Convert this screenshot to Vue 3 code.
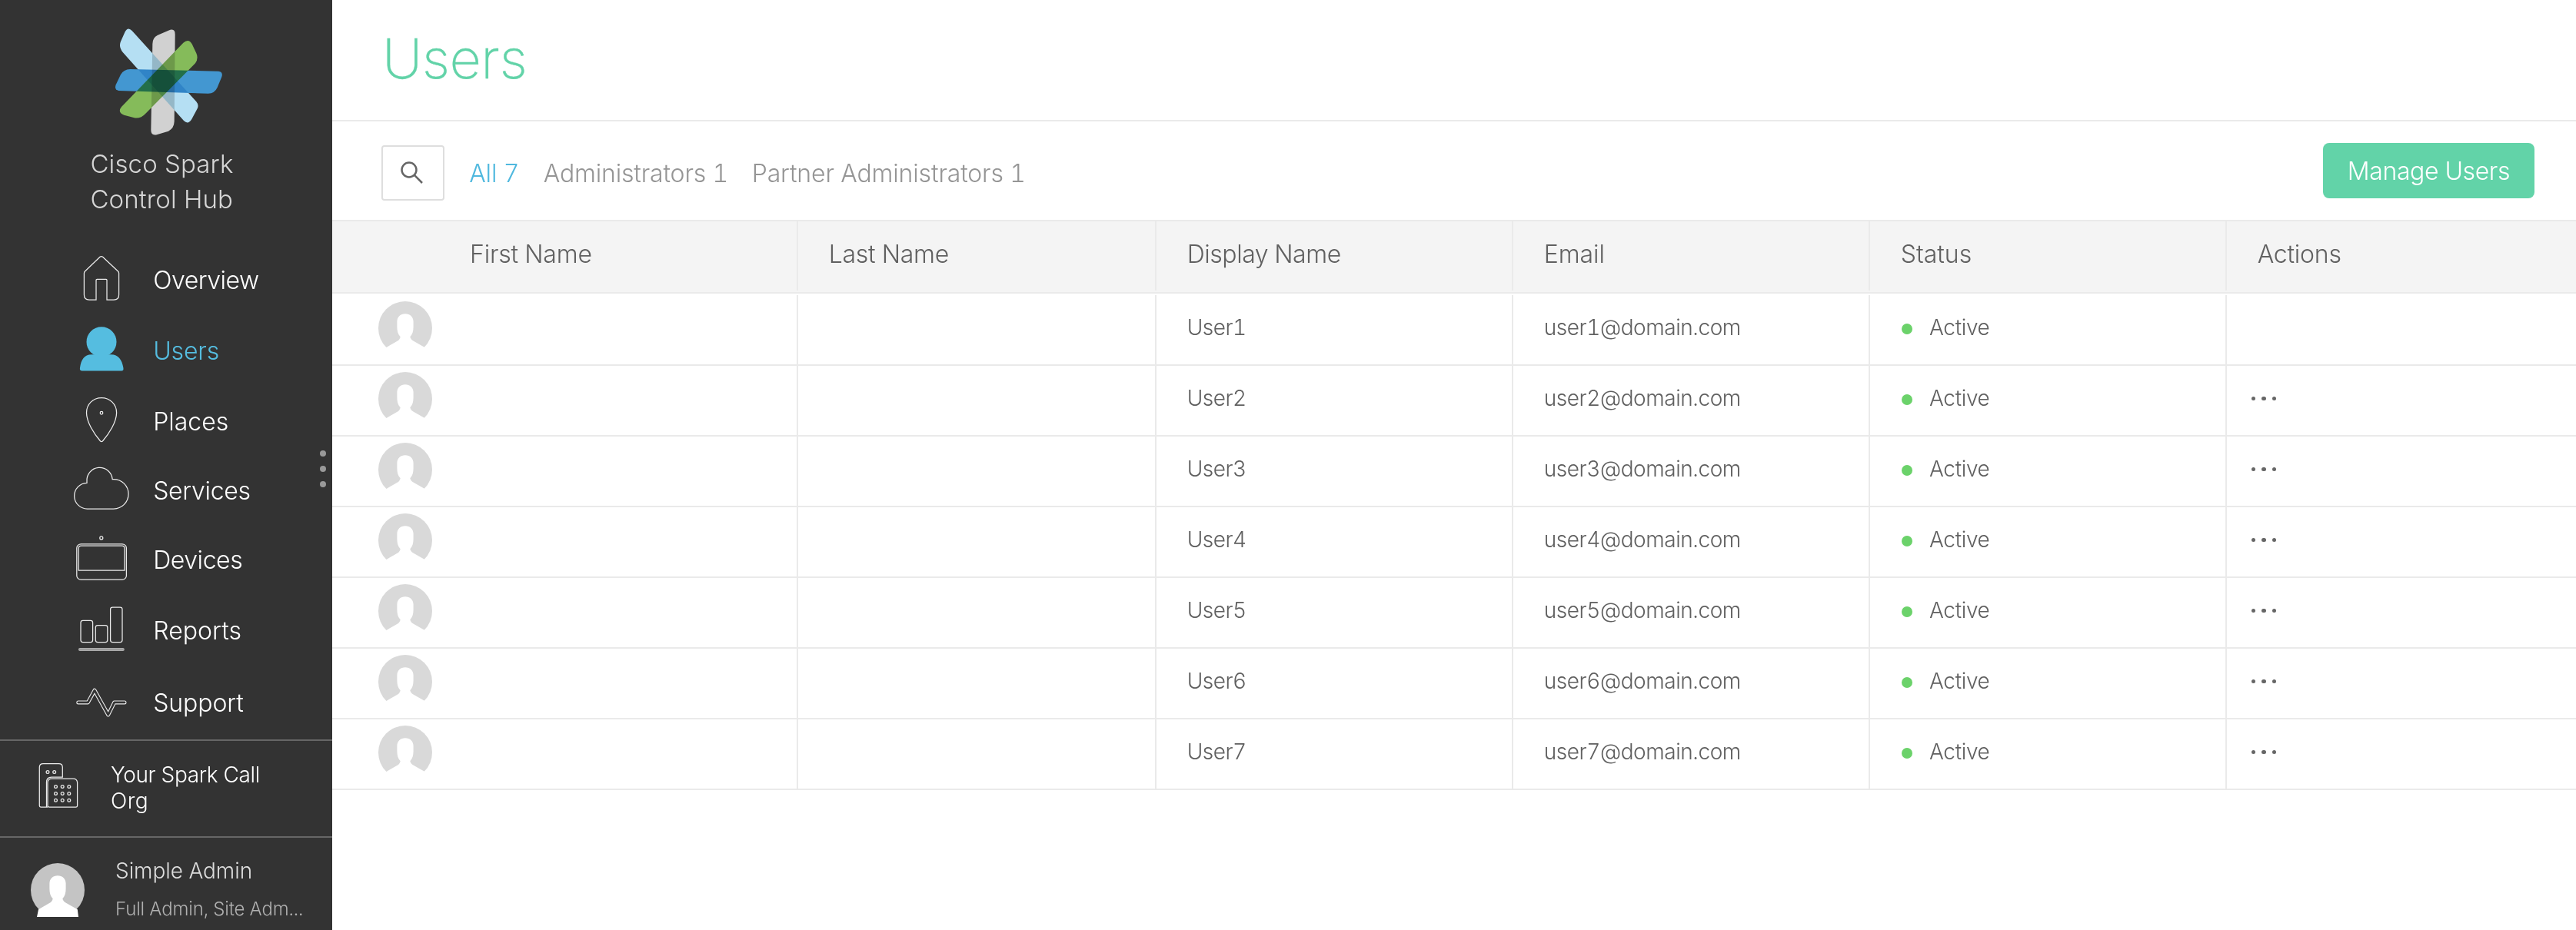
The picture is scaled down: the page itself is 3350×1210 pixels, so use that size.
<script setup>
const nav = [
  { id: 'overview', label: 'Overview' },
  { id: 'users', label: 'Users' },
  { id: 'places', label: 'Places' },
  { id: 'services', label: 'Services' },
  { id: 'devices', label: 'Devices' },
  { id: 'reports', label: 'Reports' },
  { id: 'support', label: 'Support' },
]
const columns = [
  { id: 'first', label: 'First Name' },
  { id: 'last', label: 'Last Name' },
  { id: 'display', label: 'Display Name' },
  { id: 'email', label: 'Email' },
  { id: 'status', label: 'Status' },
  { id: 'actions', label: 'Actions' },
]
const users = [1, 2, 3, 4, 5, 6, 7].map((n) => ({
  id: n,
  name: `User${n}`,
  email: `user${n}@domain.com`,
  status: 'Active',
  menu: n > 1,
}))
const silhouette =
  'M35 16.3C41 16.3 45.6 20.4 45.6 26.5V33C45.6 38.5 44.6 43 41.3 46.2C42 48.2 42.8 50 45 51.2L60.8 60.2L62 70H8L10 60.2L25.5 51.2C27.6 50 28 48.2 28.7 46.2C25.4 43 24.4 38.5 24.4 33V26.5C24.4 20.4 29 16.3 35 16.3Z'
</script>

<template>
  <div class="app">
    <aside class="sidebar">
      <div class="brand">
        <svg class="logo" viewBox="0 0 720 480">
          <g class="petals">
            <path fill="#b5dff3" d="M215 60L466 337Q477 350 470 364L448 405Q434 428 417 411L179 144Q162 122 171 102L188 64Q199 43 215 60Z" />
            <path fill="#d1d1d1" d="M295 114Q294 87 315 77L357 59Q383 47 383 74L380 414Q379 441 357 452L314 465Q289 472 289 447Z" />
            <path fill="#85bb5a" d="M415 107Q436 89 449 112L466 148Q475 168 462 187L268 383Q249 404 224 400L184 389Q157 378 174 357Z" />
            <path fill="#4397d1" d="M208 210L552 218Q571 220 565 240L548 281Q538 304 512 305L163 294Q145 290 152 271L171 231Q182 211 208 210Z" />
          </g>
        </svg>
        <div class="brand-name">
          <span>Cisco Spark</span>
          <span>Control Hub</span>
        </div>
      </div>

      <nav class="nav">
        <a v-for="item in nav" :key="item.id" class="nav-item" :class="`nav-${item.id}`">
          <svg class="nav-icon" viewBox="0 0 80 90">
            <path v-if="item.id === 'overview'" d="M33 71H24Q17.4 71 17.4 64.5V36.5Q17.4 35 18.5 34L38 15.3Q39.8 13.8 41.6 15.3L61.5 34Q62.6 35 62.6 36.5V64.5Q62.6 71 56 71H47V45.5Q47 44.4 46 44.4H34.2Q33 44.4 33 45.5Z" />
            <g v-else-if="item.id === 'users'" class="solid">
              <circle cx="40" cy="33.7" r="19.5" />
              <path d="M15 71.4Q11.2 71.4 12 67.5C13.5 57 17.5 50.3 27 50.3H52.5C62 50.3 66.5 57 68.4 67.5Q69.2 71.4 66 71.4Z" />
            </g>
            <g v-else-if="item.id === 'places'">
              <path d="M40 14.6C29 14.6 20.5 23 20.5 34C20.5 46 30 61 38.6 71Q40 72.2 41.4 71C50 61 59.6 46 59.6 34C59.6 23 51 14.6 40 14.6Z" />
              <circle cx="40" cy="34.2" r="1.8" />
            </g>
            <path v-else-if="item.id === 'services'" d="M22 69A16.85 16.85 0 0 1 21 35.3V33.5A16.6 16.6 0 0 1 54.2 30.5H55.8A19.25 19.25 0 0 1 55.8 69Z" />
            <g v-else-if="item.id === 'devices'">
              <circle cx="39.8" cy="16.9" r="2" />
              <rect x="7.8" y="24.8" width="64.6" height="49.2" rx="5.5" transform="translate(0 1.5) scale(1 .94)" />
              <path d="M10.2 59V30.5Q10.2 27 13.7 27H66.5Q70 27 70 30.5V59Z" />
            </g>
            <g v-else-if="item.id === 'reports'">
              <rect x="13" y="32.3" width="15.6" height="28.3" rx="2.8" />
              <rect x="32.3" y="38.7" width="15.5" height="21.9" rx="2.8" />
              <rect x="51.6" y="15" width="15.4" height="45.6" rx="2.8" />
              <rect class="base" x="10.6" y="68.6" width="58.6" height="2.8" rx="1.4" />
            </g>
            <g v-else>
              <path class="pulse-edge" d="M9.8 44.9H22.4L31 29.2L48.7 61L56.7 44.9H70" />
              <path class="pulse-core" d="M9.8 44.9H22.4L31 29.2L48.7 61L56.7 44.9H70" />
            </g>
          </svg>
          <span>{{ item.label }}</span>
        </a>
      </nav>
      <div class="grip"><i /><i /><i /></div>

      <div class="org">
        <svg class="org-icon" viewBox="0 0 60 70">
          <path d="M22 68H13Q11.3 68 11.3 66.3V16.3Q11.3 11.5 16.1 11.5H36.5Q41.3 11.5 41.3 16.3V29.2H27Q20.5 29.2 20.5 36V68" />
          <path d="M24 68Q22 68 22 66.3V36.6Q22 31 27.6 31H55Q60.6 31 60.6 36.6V66.3Q60.6 68 59 68Z" />
          <circle cx="22" cy="22.4" r="1.9" /><circle cx="30.7" cy="22.4" r="1.9" />
          <template v-for="y in [41.6, 50.4, 59.2]" :key="y">
            <circle v-for="x in [32.5, 41.2, 49.8]" :key="x" :cx="x" :cy="y" r="1.9" />
          </template>
        </svg>
        <div class="org-name"><span class="org-first">Your Spark Call</span><span class="org-second">Org</span></div>
      </div>

      <div class="account">
        <svg class="avatar" viewBox="0 0 70 70">
          <circle cx="35" cy="35" r="35" fill="#c4c4c4" />
          <path :d="silhouette" fill="#fff" />
        </svg>
        <div class="account-text">
          <span class="account-name">Simple Admin</span>
          <span class="account-role">Full Admin, Site Adm...</span>
        </div>
      </div>
    </aside>

    <main class="main">
      <h1 class="title">Users</h1>
      <div class="toolbar">
        <button class="search">
          <svg viewBox="0 0 78 68">
            <circle cx="34" cy="30" r="9.5" />
            <path d="M41.2 37.2L51 47" />
          </svg>
        </button>
        <div class="filters">
          <a class="filter-all">All 7</a>
          <a class="filter-admin">Administrators 1</a>
          <a class="filter-partner">Partner Administrators 1</a>
        </div>
        <button class="manage">Manage Users</button>
      </div>

      <div class="table">
        <div class="row head">
          <div v-for="c in columns" :key="c.id" class="cell" :class="`h-${c.id}`">{{ c.label }}</div>
        </div>
        <div v-for="u in users" :key="u.id" class="row body">
          <div class="cell c-avatar">
            <svg class="avatar" viewBox="0 0 70 70">
              <circle cx="35" cy="35" r="35" fill="#d9d9d9" />
              <path :d="silhouette" fill="#fff" />
            </svg>
          </div>
          <div class="cell" />
          <div class="cell c-name">{{ u.name }}</div>
          <div class="cell c-email">{{ u.email }}</div>
          <div class="cell c-status"><i class="dot" /><span>{{ u.status }}</span></div>
          <div class="cell c-actions">
            <span v-if="u.menu" class="more"><i /><i /><i /></span>
          </div>
        </div>
      </div>
    </main>
  </div>
</template>

<style>
body { margin: 0; background: #fff; }
</style>

<style scoped>
.app {
  display: flex;
  height: 1210px;
  overflow: hidden;
  font-family: Inter, "Liberation Sans", sans-serif;
  font-weight: 300;
  font-variant-numeric: tabular-nums;
  white-space: nowrap;
}
svg { display: block; flex: none; }

.sidebar {
  position: relative;
  display: flex;
  flex-direction: column;
  flex: none;
  width: 432px;
  background: #333;
  color: #fff;
}
.brand { padding-top: 20px; }
.logo { width: 240px; height: 160px; margin-left: 100px; }
.petals { isolation: isolate; }
.petals path { mix-blend-mode: multiply; }
.brand-name {
  display: flex;
  flex-direction: column;
  margin: 10px 0 0 117.4px;
  font-size: 33px;
  line-height: 46px;
  letter-spacing: 0.15px;
  color: #d6d6d6;
}

.nav { display: flex; flex-direction: column; margin-top: 37px; }
.nav-item {
  display: flex;
  height: 90px;
  padding-left: 92px;
  gap: 27.2px;
  font-size: 32px;
  line-height: 92px;
}
.nav-icon { width: 80px; height: 90px; fill: none; stroke: #ececec; stroke-width: 1.25; }
.nav-overview { letter-spacing: -0.5px; }
.nav-users { margin-top: 2px; letter-spacing: -0.15px; color: #55bde0; }
.nav-users .solid { fill: #55bde0; stroke: none; }
.nav-places { margin-top: 2px; }
.nav-services { letter-spacing: -0.31px; }
.nav-devices { letter-spacing: -0.44px; }
.nav-reports { margin-top: 2px; letter-spacing: 0.07px; }
.nav-support { margin-top: 4px; letter-spacing: -0.09px; }
.base { fill: #999; stroke: #aaa; }
.pulse-edge { stroke-width: 5; stroke-linejoin: round; stroke-linecap: round; }
.pulse-core { stroke: #333; stroke-width: 2.8; stroke-linejoin: round; stroke-linecap: round; }

.grip {
  position: absolute;
  top: 586px;
  right: 8px;
  display: flex;
  flex-direction: column;
  gap: 12px;
}
.grip i { width: 8px; height: 8px; border-radius: 50%; background: #999; }

.org {
  display: flex;
  height: 124px;
  margin-top: 3px;
  border-top: 2px solid #666;
  font-size: 28px;
  line-height: 34px;
}
.org-icon {
  width: 60px;
  height: 70px;
  margin: 18px 0 0 40px;
  overflow: visible;
  fill: none;
  stroke: #ececec;
  stroke-width: 1.25;
}
.org-name { display: flex; flex-direction: column; margin: 27px 0 0 44px; }
.org-first { letter-spacing: -0.33px; }
.org-second { letter-spacing: 0.4px; }
.account { display: flex; flex: 1; border-top: 2px solid #666; }
.avatar { width: 70px; height: 70px; }
.account .avatar { margin: 33px 0 0 40px; }
.account-text { display: flex; flex-direction: column; gap: 16px; margin: 26px 0 0 40px; line-height: 34px; }
.account-name { font-size: 28px; letter-spacing: -0.06px; color: #ddd; }
.account-role { font-size: 24px; letter-spacing: -0.16px; color: #b0b0b0; }

.main { flex: 1; min-width: 0; color: #606060; }
.title {
  height: 156px;
  margin: 0;
  padding-left: 65px;
  border-bottom: 2px solid #eaeaea;
  font-size: 72px;
  line-height: 152px;
  font-weight: 200;
  letter-spacing: -0.6px;
  color: #62d3a8;
  -webkit-text-stroke: 0.3px #62d3a8;
}
.toolbar { display: flex; height: 128px; padding-left: 64px; }
button { font: inherit; padding: 0; }
.search {
  box-sizing: border-box;
  width: 82px;
  height: 72px;
  margin-top: 31px;
  border: 2px solid #dedede;
  border-radius: 4px;
  background: #fff;
}
.search svg { width: 78px; height: 68px; fill: none; stroke: #666; stroke-width: 2.5; }
.filters {
  display: flex;
  flex: 1;
  margin: 32px 0 0 32.2px;
  font-size: 32px;
  line-height: 72px;
  color: #959595;
}
.filter-all { width: 96.5px; letter-spacing: -0.12px; color: #4fb8de; }
.filter-admin { width: 271px; letter-spacing: -0.17px; }
.filter-partner { letter-spacing: -0.15px; }
.manage {
  width: 275px;
  height: 72px;
  margin: 28px 54px 0 0;
  border: 0;
  border-radius: 8px;
  background: #62d3a8;
  color: #fff;
  font-size: 32px;
  line-height: 74px;
  letter-spacing: -0.38px;
}

.row {
  display: grid;
  grid-template-columns: 606px 466px 464px 464px 464px 1fr;
  border-bottom: 2px solid #eaeaea;
}
.cell { box-sizing: border-box; padding-left: 39.7px; border-right: 2px solid #eaeaea; }
.cell:last-child { border-right: 0; }
.head {
  height: 92px;
  box-sizing: content-box;
  border-top: 2px solid #eaeaea;
  background: #f4f4f4;
  font-size: 32px;
  line-height: 85px;
}
.head .cell { height: 90px; }
.head .h-first { padding-left: 179px; letter-spacing: -0.2px; }
.h-last { letter-spacing: -0.25px; }
.h-display { letter-spacing: -0.45px; }
.h-email { letter-spacing: -0.08px; }
.h-actions { letter-spacing: -0.22px; }
.body { height: 90px; font-size: 28px; line-height: 84px; }
.head + .body { padding-top: 2px; }
.body .c-avatar { padding: 8px 0 0 60px; }
.c-name { letter-spacing: -0.5px; }
.c-email { letter-spacing: -0.43px; }
.c-status { display: flex; letter-spacing: -0.34px; }
.dot { width: 14px; height: 14px; margin: 37px 22px 0 1.3px; border-radius: 50%; background: #6bd26a; }
.more { display: flex; gap: 8px; margin: 39.5px 0 0 -7.7px; }
.more i { width: 5.4px; height: 5.4px; border-radius: 50%; background: #666; }
</style>
